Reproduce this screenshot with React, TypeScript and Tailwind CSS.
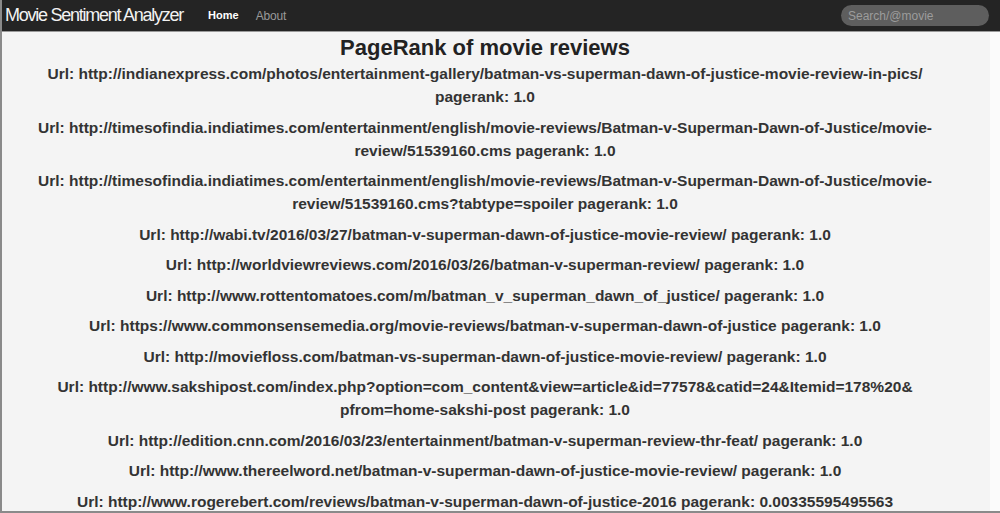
import React from "react"

const reviews = [
  { url: "http://indianexpress.com/photos/entertainment-gallery/batman-vs-superman-dawn-of-justice-movie-review-in-pics/", rank: "1.0" },
  { url: "http://timesofindia.indiatimes.com/entertainment/english/movie-reviews/Batman-v-Superman-Dawn-of-Justice/movie-review/51539160.cms", rank: "1.0" },
  { url: "http://timesofindia.indiatimes.com/entertainment/english/movie-reviews/Batman-v-Superman-Dawn-of-Justice/movie-review/51539160.cms?tabtype=spoiler", rank: "1.0" },
  { url: "http://wabi.tv/2016/03/27/batman-v-superman-dawn-of-justice-movie-review/", rank: "1.0" },
  { url: "http://worldviewreviews.com/2016/03/26/batman-v-superman-review/", rank: "1.0" },
  { url: "http://www.rottentomatoes.com/m/batman_v_superman_dawn_of_justice/", rank: "1.0" },
  { url: "https://www.commonsensemedia.org/movie-reviews/batman-v-superman-dawn-of-justice", rank: "1.0" },
  { url: "http://moviefloss.com/batman-vs-superman-dawn-of-justice-movie-review/", rank: "1.0" },
  { url: "http://www.sakshipost.com/index.php?option=com_content&view=article&id=77578&catid=24&Itemid=178%20& pfrom=home-sakshi-post", rank: "1.0" },
  { url: "http://edition.cnn.com/2016/03/23/entertainment/batman-v-superman-review-thr-feat/", rank: "1.0" },
  { url: "http://www.thereelword.net/batman-v-superman-dawn-of-justice-movie-review/", rank: "1.0" },
  { url: "http://www.rogerebert.com/reviews/batman-v-superman-dawn-of-justice-2016", rank: "0.00335595495563" },
]

export default function App() {
  return (
    <div
      className="h-[513px] overflow-hidden bg-[#f4f4f4] border-l-2 border-b-2 border-[#8a8a8a] flex flex-col"
      style={{ fontFamily: '"Liberation Sans", Arial, sans-serif' }}
    >
      <nav className="h-[32px] shrink-0 bg-[#242424] flex items-center border-b border-[#9a9a9a]">
        <span className="ml-[3px] text-[18px] text-[#f2f2f2] tracking-[-1.25px]">Movie Sentiment Analyzer</span>
        <a className="ml-[25px] text-[11px] font-bold text-white">Home</a>
        <a className="ml-[17px] text-[12px] text-[#9a9a9a] tracking-[-0.2px]">About</a>
        <div className="ml-auto mr-[11px] w-[148px] h-[21px] rounded-full bg-[#5e5e5e] flex items-center px-[7px]">
          <span className="text-[12px] text-[#9c9c9c]">Search/@movie</span>
        </div>
      </nav>

      <div className="flex flex-1">
        <main className="w-[920px] ml-[23px] text-center text-[#333]">
          <h2 className="mt-[3px] text-[22px] font-bold leading-[26px] text-[#222]">PageRank of movie reviews</h2>
          <div className="mt-[1px] flex flex-col gap-[7.5px]">
            {reviews.map((r) => (
              <p key={r.url} className="text-[15.5px] font-bold leading-[23px] break-words">
                Url: {r.url} pagerank: {r.rank}
              </p>
            ))}
          </div>
        </main>
        <div className="ml-auto w-[10px] bg-[#fbfbfb]" />
      </div>
    </div>
  )
}
